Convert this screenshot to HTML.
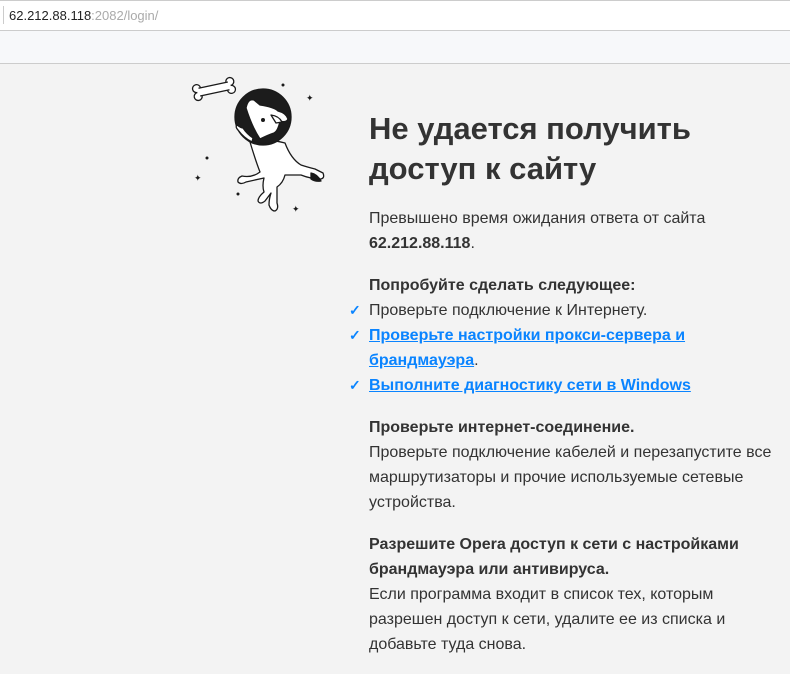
<!DOCTYPE html>
<html><head><meta charset="utf-8"><style>
*{margin:0;padding:0;box-sizing:border-box}
body{width:790px;height:660px;overflow:hidden;background:#f3f3f3;font-family:"Liberation Sans",sans-serif;position:relative}
#addr{position:absolute;left:0;top:0;width:790px;height:31px;background:#fff;border-top:1px solid #ccc;border-bottom:1px solid #ccc;font-size:13px;line-height:29px;padding-left:9px;color:#222}
#addr:before{content:"";position:absolute;left:3px;top:5px;width:1px;height:18px;background:#ccc}
#addr span{color:#aaa}
#bar{position:absolute;left:0;top:31px;width:790px;height:33px;background:#f7f8fa;border-bottom:1px solid #ccc}
#c{position:absolute;left:369px;top:109px;color:#333;font-size:16px;line-height:25px}
h1{font-size:31px;line-height:40px;font-weight:bold;color:#333;margin-bottom:17px}
p{margin-bottom:17px}
b{color:#333}
a{color:#0a84ff;font-weight:bold;text-decoration:underline}
.ck{position:relative}
.ck:before{content:"✓";position:absolute;left:-20px;color:#0a84ff;font-weight:bold;font-size:14px}
</style></head><body>
<div id="addr">62.212.88.118<span>:2082/login/</span></div>
<div id="bar"></div>
<svg style="position:absolute;left:190px;top:75px" width="140" height="140" viewBox="190 75 140 140">
<g stroke="#1a1a1a" stroke-width="1.3" fill="#fff" stroke-linejoin="round">
<g transform="rotate(-12 214 89)">
<circle cx="197" cy="85" r="4"/><circle cx="197" cy="93" r="4"/><circle cx="231" cy="85" r="4"/><circle cx="231" cy="93" r="4"/>
<rect x="197" y="85" width="34" height="8" stroke="none"/>
<path d="M199 85 h30 M199 93 h30" fill="none"/>
</g>
<path d="M250 142 q6 20 10 30 q-8 6 -18 4 q-5 2 -4 6 q3 3 8 0 l18 -4 q-2 8 0 14 q-6 5 -6 9 q2 4 7 0 l6 -8 q-2 6 -2 12 q2 6 6 6 q4 -2 2 -8 l0 -16 q6 -4 8 -12 l16 0 q10 4 20 4 q4 -1 2 -6 l-8 -4 q-8 -2 -14 -4 q-10 -6 -16 -22 q-16 -4 -24 -2z"/>
<circle cx="263" cy="117" r="28" fill="#1c1c1c"/>
<path d="M246 108 q2 -10 8 -8 l6 5 q14 2 18 6 q8 2 10 8 q-2 4 -8 2 q-2 10 -6 12 q-6 2 -14 6 q-8 -12 -14 -31z"/>
<path d="M271 115 q8 1 11 7 l-6 1z" fill="#fff"/>
<path d="M252 142 q-8 -4 -14 -12 q-3 -3 -1 -5 q4 3 6 3 q4 6 10 10z"/>
<path d="M252 141 q12 4 22 1" fill="none"/>
<path d="M311 173 q6 1 10 8 q-6 1 -10 -2z" fill="#1a1a1a"/>
</g>
<circle cx="263" cy="120" r="2" fill="#1a1a1a"/>
<g fill="#1a1a1a"><circle cx="283" cy="85" r="1.5"/><circle cx="207" cy="158" r="1.5"/><circle cx="238" cy="194" r="1.5"/>
<text x="306" y="101" font-size="9">✦</text><text x="194" y="181" font-size="9">✦</text><text x="292" y="212" font-size="9">✦</text></g>
</svg>
<div id="c">
<h1>Не удается получить<br>доступ к сайту</h1>
<p>Превышено время ожидания ответа от сайта<br><b>62.212.88.118</b>.</p>
<p><b>Попробуйте сделать следующее:</b><br>
<span class="ck">Проверьте подключение к Интернету.</span><br>
<span class="ck"><a>Проверьте настройки прокси-сервера и</a></span><br><a>брандмауэра</a>.<br>
<span class="ck"><a>Выполните диагностику сети в Windows</a></span></p>
<p><b>Проверьте интернет-соединение.</b><br>Проверьте подключение кабелей и перезапустите все<br>маршрутизаторы и прочие используемые сетевые<br>устройства.</p>
<p><b>Разрешите Opera доступ к сети с настройками<br>брандмауэра или антивируса.</b><br>Если программа входит в список тех, которым<br>разрешен доступ к сети, удалите ее из списка и<br>добавьте туда снова.</p>
</div>
</body></html>
